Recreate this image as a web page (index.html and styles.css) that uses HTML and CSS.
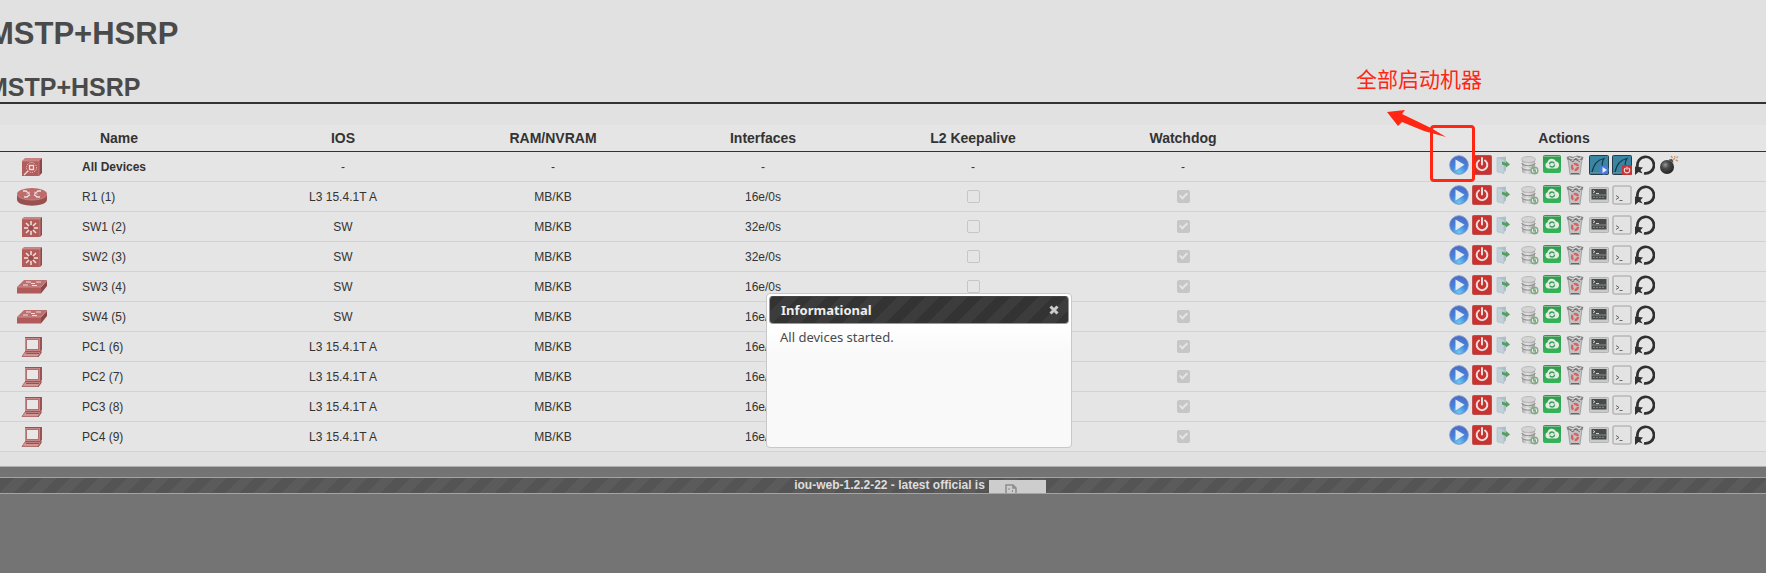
FILE: index.html
```html
<!DOCTYPE html>
<html lang="en">
<head>
<meta charset="utf-8">
<title>MSTP+HSRP</title>
<link rel="stylesheet" href="styles.css">
</head>
<body>
<svg class="sprite" aria-hidden="true">
  <defs>
    <radialGradient id="blue" cx="50%" cy="90%" r="85%"><stop offset="0" stop-color="#6cc9f3"/><stop offset=".5" stop-color="#4685dc"/><stop offset="1" stop-color="#4b6cc6"/></radialGradient>
    <linearGradient id="green" x1="0" y1="0" x2="0" y2="1"><stop offset="0" stop-color="#2f9a4c"/><stop offset="1" stop-color="#35b458"/></linearGradient>
    <linearGradient id="metal" x1="0" y1="0" x2="1" y2="0"><stop offset="0" stop-color="#a8a8a8"/><stop offset=".4" stop-color="#e0e0e0"/><stop offset="1" stop-color="#9c9c9c"/></linearGradient>
    <radialGradient id="ball" cx="38%" cy="35%" r="65%"><stop offset="0" stop-color="#999"/><stop offset=".4" stop-color="#4a4a4a"/><stop offset="1" stop-color="#262626"/></radialGradient>
  </defs>
  <symbol id="dev-all" viewBox="0 0 20 20">
    <path d="M0 4 3 1H20L17 4Z" fill="#c98080"/><path d="M17 4 20 1V16L17 19Z" fill="#8a4848"/><path d="M0 4H17V19H0Z" fill="#b35c5c"/>
    <path d="M0 4H17V19" fill="none" stroke="#cf9090" stroke-width=".7"/>
    <circle cx="9.500" cy="10.500" r="5" fill="none" stroke="#ecd2d2" stroke-width="1" stroke-dasharray="1 1"/>
    <path d="M7.500 8.500h4v4h-4zM2 18 6 14" fill="none" stroke="#f0dcdc" stroke-width="1.300"/>
  </symbol>
  <symbol id="dev-router" viewBox="0 0 30 20">
    <path d="M0 7V13C1 20.500 29 20.500 30 13V7Z" fill="#985050"/><ellipse cx="15" cy="7" rx="15" ry="6" fill="#bd6c6c"/>
    <path d="M0 7C1 15 29 15 30 7" fill="none" stroke="#cf9292" stroke-width=".7"/>
    <path d="M6 4H9L12 6.500M24 4H21L18 6.500M7 10H10L13 7.500M23 10H20L17 7.500" fill="none" stroke="#f0dede" stroke-width="1.300"/>
    <path d="M12.500 4.500V7H9M17.500 4.500V7H21" fill="none" stroke="#e4c2c2" stroke-width=".7"/>
  </symbol>
  <symbol id="dev-l3" viewBox="0 0 20 20">
    <path d="M0 2 2 0H20L18 2Z" fill="#c98080"/><path d="M18 2 20 0V18L18 20Z" fill="#8a4848"/><path d="M0 2H18V20H0Z" fill="#b35c5c"/>
    <path d="M0 2H18V20" fill="none" stroke="#cf9090" stroke-width=".7"/>
    <rect x="7" y="9" width="4" height="4" fill="#9b4c4c"/>
    <path d="M9 4V8M9 14V18M2 11H6M12 11H16M4 6l3 3M14 6l-3 3M4 16l3-3M14 16l-3-3" stroke="#f2e2e2" stroke-width="1.500"/>
  </symbol>
  <symbol id="dev-l2" viewBox="0 0 30 14">
    <path d="M0 7 7 0H30L24 7Z" fill="#bd7070"/><path d="M24 7 30 0V6L24 13.500Z" fill="#8a4848"/><path d="M0 7H24V13.500H0Z" fill="#b05a5a"/>
    <path d="M0 7H24L30 .5" fill="none" stroke="#d8a2a2" stroke-width=".7"/>
    <path d="M9 2h5M14 3.500h4M19 2h5M6 5h5M15 5.500h5" stroke="#f0dede"/>
  </symbol>
  <symbol id="dev-pc" viewBox="0 0 20 20">
    <path d="M3 0H20V13L18 15H3Z" fill="#9c5252"/><path d="M3 1H18V14H3Z" fill="#c98686"/><path d="M4.500 2.500H16.500V12.500H4.500Z" fill="#e9e6e6" stroke="#9c5252" stroke-width=".7"/>
    <path d="M3 15H19L16 19.500H0Z" fill="#cf9898" stroke="#a65c5c" stroke-width=".8"/><path d="M4 16.500H17M19 14V16L16 20" fill="none" stroke="#994f4f"/>
  </symbol>
  <symbol id="i-play" viewBox="0 0 20 20">
    <circle cx="10" cy="10" r="9.300" fill="url(#blue)" stroke="#7d93c9" stroke-width=".9"/><path d="M6.500 4.500 15.500 9.800 6.500 15.500Z" fill="#e3ebf3"/>
  </symbol>
  <symbol id="i-power" viewBox="0 0 20 20">
    <rect x=".5" y=".5" width="19" height="19" rx="1" fill="#c8322f" stroke="#c05050"/><path d="M7 5.500a5.300 5.300 0 1 0 6 0M10 3v6.500" fill="none" stroke="#ecdede" stroke-width="2" stroke-linecap="round"/>
  </symbol>
  <symbol id="i-export" viewBox="0 0 20 20">
    <path d="M3 2.500 11 1.500V16L3 17.500Z" fill="#adbfc9"/><path d="M2 2.500 9 4.500V18.500L2 16.500Z" fill="#c2d1d9" stroke="#aabcc6" stroke-width=".6"/><path d="M7 6.500 11 8V6L15 9.500 11 12.500V11L7 9.500Z" fill="#559f63"/>
  </symbol>
  <symbol id="i-db" viewBox="0 0 20 20">
    <path d="M3 4V16.500C4 20 15 20 16 16.500V4Z" fill="url(#metal)"/><ellipse cx="9.500" cy="4.500" rx="7" ry="3" fill="#d4d4d4" stroke="#aaa" stroke-width=".7"/>
    <path d="M2.500 8C4 11.500 15 11.500 16.500 8M2.500 12.500C4 16 15 16 16.500 12.500" fill="none" stroke="#8f8f8f"/><path d="M2.500 6.500C4 10 15 10 16.500 6.500M2.500 11C4 14.500 15 14.500 16.500 11" fill="none" stroke="#e8e8e8" stroke-width=".7"/>
    <circle cx="15.500" cy="15.500" r="4" fill="#86a988"/><path d="M13.500 14v3h2M17.500 17v-3h-2" fill="none" stroke="#e0e8e0"/>
  </symbol>
  <symbol id="i-cloud" viewBox="0 0 20 20">
    <rect x="1" y="0" width="18" height="18" rx="2" fill="url(#green)"/><path d="M2 1.500H18" stroke="#7dbb8b"/><path d="M6 13.500a3.300 3.300 0 0 1-.5-6.300A4.500 4.500 0 0 1 14 6.500 3.600 3.600 0 0 1 14.500 13.500Z" fill="#e2ece4"/>
    <circle cx="10" cy="9.500" r="2.500" fill="none" stroke="#3b9c55" stroke-width="1.300" stroke-dasharray="6.500 1.300"/>
  </symbol>
  <symbol id="i-trash" viewBox="0 0 20 20">
    <path d="M3 4H17L15 19.500H5Z" fill="#c4c4c4" stroke="#8e8e8e" stroke-width=".7"/><path d="M1.500 2 5 1 8 2 12 .5 18.500 2 17.500 5H2.500Z" fill="#858585"/><path d="M4 2.500 8 4 11 2 14 4 16 2.500" fill="none" stroke="#dedede" stroke-width="1.200"/>
    <path d="M5 5l3 2 2-3 5 3" fill="none" stroke="#666" stroke-width=".9"/><circle cx="10" cy="12" r="3" fill="none" stroke="#d86262" stroke-width="2.400" stroke-dasharray="5 1.300"/><path d="M6 18.500H14" stroke="#666"/>
  </symbol>
  <symbol id="i-shark" viewBox="0 0 20 20">
    <rect x=".5" y=".5" width="19" height="19" rx="1" fill="#3a85a4" stroke="#263c46"/><path d="M3 17C5 9 8 5 15 3.500 12.500 7 12.500 11 15 16" fill="none" stroke="#173744" stroke-width="1.200"/><path d="M1 17.500H19" stroke="#6298aa" stroke-width=".7"/>
  </symbol>
  <symbol id="i-sharkplay" viewBox="0 0 20 20"><use href="#i-shark"/><circle cx="15" cy="15" r="4.700" fill="#477dd8"/><path d="M13.500 12 18 15 13.500 18Z" fill="#eaf0f5"/></symbol>
  <symbol id="i-sharkstop" viewBox="0 0 20 20"><use href="#i-shark"/><rect x="10" y="10" width="10" height="10" rx="1" fill="#c93434"/><path d="M13.500 13a2.700 2.700 0 1 0 3 0M15 11.800v3" fill="none" stroke="#f0dede" stroke-width="1.200"/></symbol>
  <symbol id="i-term" viewBox="0 0 20 20">
    <rect x=".5" y="2.500" width="19" height="15" rx="1" fill="#c9c9c9" stroke="#b4b4b4"/><rect x="2.500" y="4" width="15" height="10.500" fill="#484b4b"/><path d="M3 10H17" stroke="#8a8a8a"/><path d="M4 5.500l2 1.200-2 1.300M7 8.500h3" fill="none" stroke="#ddd" stroke-width=".9"/><path d="M4 12.300h12" stroke="#8e8e8e" stroke-dasharray="2 1"/>
  </symbol>
  <symbol id="i-shell" viewBox="0 0 20 20">
    <rect x="1" y="1" width="18" height="18" rx="2" fill="#e3e3e3" stroke="#b8b8b8" stroke-width="1.600"/><path d="M4 10.500l3 2-3 2M7.500 15.500h3" fill="none" stroke="#666" stroke-width="1"/>
  </symbol>
  <symbol id="i-reload" viewBox="0 0 20 20">
    <path d="M2.600 12A8.300 8.300 0 1 1 9 18.200" fill="none" stroke="#303030" stroke-width="2.700"/><path d="M0 11.500 8 12.500 5.500 15 7.500 18.500 3.500 17 0 20Z" fill="#303030"/>
  </symbol>
  <symbol id="i-bomb" viewBox="0 0 20 20">
    <circle cx="8" cy="12" r="7" fill="url(#ball)"/><path d="M10 5 13 4.500 14 7.500" fill="#444" stroke="#555"/><path d="M14 5l2-2M16.500 5l2.500 1M15.500 1l.5 1.500M12 1l1.500 2M17.500 3l1.500-1.500" stroke="#cf9a72" stroke-width="1.400"/>
  </symbol>
</svg>

<div class="page">
  <main class="content">
    <h1 class="title">MSTP+HSRP</h1>
    <h2 class="subtitle">MSTP+HSRP</h2>
    <table class="devices">
      <colgroup><col class="col-icon"><col class="col-name"><col class="col-data"><col class="col-data"><col class="col-data"><col class="col-data"><col class="col-data"><col></colgroup>
      <thead>
        <tr><th colspan="2">Name</th><th>IOS</th><th>RAM/NVRAM</th><th>Interfaces</th><th>L2 Keepalive</th><th>Watchdog</th><th>Actions</th></tr>
      </thead>
      <tbody id="rows"></tbody>
    </table>
  </main>
  <footer class="footer">
    <p class="version"><span>iou-web-1.2.2-22 - latest official is</span>
      <svg class="frame" viewBox="0 0 57 17" role="img" aria-label="Unavailable"><rect width="57" height="17" fill="#cdcdcd"/><path d="M17 17V5H24L27 8V17M24 5V8H27" fill="none" stroke="#8c8c8c" stroke-width="1.500"/><path d="M20 8v2M23.500 10v2" stroke="#8c8c8c"/></svg>
    </p>
  </footer>

  <section class="dialog" role="dialog" aria-labelledby="dialog-title">
    <header class="dialog-bar">
      <h3 class="dialog-title" id="dialog-title">Informational</h3>
      <button class="dialog-close" type="button" aria-label="Close"><svg viewBox="0 0 10 10"><path d="M1.500 1.500 8.500 8.500M8.500 1.500 1.500 8.500" stroke="#ccc" stroke-width="3"/></svg></button>
    </header>
    <p class="dialog-text">All devices started.</p>
  </section>

  <p class="note" lang="zh">全部启动机器</p>
  <svg class="arrow" viewBox="0 0 60 30" aria-hidden="true"><path d="M0 3 18 1 15 5 44 19 59 28 37 22 15 13 11 17Z" fill="#ff2614"/></svg>
  <div class="marker"></div>
</div>
<script src="devices.js"></script>
</body>
</html>
```

FILE: styles.css
```css
body {
  margin: 0;
  background: #747474;
  color: #333;
  font: 12px/16px "Liberation Sans", Arial, sans-serif;
  overflow: hidden;
}

.sprite {
  position: absolute;
  width: 0;
  height: 0;
}

.page {
  position: relative;
  width: calc(100% + 74px);
}

.content {
  padding: 16px 0 14px;
  background: #e1e1e1;
  border-bottom: 1px solid #b0b0b0;
}

.title,
.subtitle {
  margin: 0;
  padding: 0;
  color: #4a4a4a;
  text-indent: -12px;
}

.title {
  font-size: 31px;
  line-height: 36px;
}

.subtitle {
  margin: 20px 0 21px;
  border-bottom: 2px solid #333;
  font-size: 25px;
  line-height: 30px;
  text-indent: -13px;
}

.devices {
  width: 100%;
  border-collapse: collapse;
  table-layout: fixed;
  background: #e5e5e5;
}

.col-icon { width: 64px; }
.col-name { width: 174px; }
.col-data { width: 210px; }

.devices th {
  height: 26px;
  padding: 0;
  border-bottom: 1px solid #333;
  font-size: 14px;
  text-align: center;
}

.devices td {
  height: 29px;
  padding: 0;
  border-bottom: 1px solid #d2d2d2;
  text-align: center;
}

.devices .name {
  padding-left: 18px;
  text-align: left;
}

.devices .strong { font-weight: bold; }

.device-icon {
  display: block;
  width: 30px;
  height: 20px;
  margin: 0 auto;
}

.check {
  appearance: none;
  display: block;
  box-sizing: border-box;
  width: 13px;
  height: 13px;
  margin: 0 auto;
  border: 1px solid #c6c6c6;
  border-radius: 2px;
}

.check:checked {
  background: #c6c6c6;
}

.check:checked::after {
  content: "";
  display: block;
  width: 3px;
  height: 6px;
  margin: 0 auto;
  border: solid #e5e5e5;
  border-width: 0 2px 2px 0;
  transform: rotate(45deg);
}

.actions {
  width: 231px;
  margin: 0 auto;
  padding-bottom: 3px;
  text-align: left;
  white-space: nowrap;
}

.action {
  width: 20px;
  height: 20px;
  padding: 0;
  border: 0;
  background: none;
  vertical-align: middle;
}

.action svg {
  display: block;
  width: 20px;
  height: 20px;
}

.footer {
  padding-top: 10px;
}

.version {
  display: flex;
  justify-content: center;
  align-items: flex-start;
  gap: 4px;
  height: 15px;
  margin: 0;
  overflow: hidden;
  border: solid #a4a4a4;
  border-width: 1px 0;
  background: repeating-linear-gradient(135deg, #545454 0 10px, #5b5b5b 10px 20px);
  color: #dedede;
  font-weight: bold;
  line-height: 15px;
}

.frame {
  width: 57px;
  height: 17px;
  margin-top: 2px;
}

.dialog {
  position: absolute;
  top: 293px;
  left: 766px;
  box-sizing: border-box;
  width: 306px;
  height: 155px;
  padding: 2px;
  border: 1px solid #c8c8c8;
  border-radius: 4px;
  background: linear-gradient(#fff 30px, #f9f9f9 60px);
  font-family: "Noto Sans", Verdana, sans-serif;
  font-size: 13px;
}

.dialog-bar {
  display: flex;
  justify-content: space-between;
  align-items: center;
  height: 26px;
  padding: 0 9px 0 11px;
  border: 1px solid #999;
  border-top-color: #444;
  border-radius: 4px;
  background: repeating-linear-gradient(135deg, #333 0 10px, #3c3c3c 10px 20px);
}

.dialog-title {
  margin: 0;
  color: #eee;
  font-size: 13px;
}

.dialog-close {
  padding: 0;
  border: 0;
  background: none;
}

.dialog-close svg {
  display: block;
  width: 10px;
  height: 10px;
}

.dialog-text {
  margin: 5px 11px;
  color: #4a4a4a;
}

.note {
  position: absolute;
  top: 64px;
  left: 1356px;
  margin: 0;
  color: #ff2614;
  font: 21px/28px "Noto Sans CJK SC", sans-serif;
}

.arrow {
  position: absolute;
  top: 109px;
  left: 1387px;
  width: 60px;
  height: 30px;
}

.marker {
  position: absolute;
  top: 125px;
  left: 1430px;
  box-sizing: border-box;
  width: 45px;
  height: 57px;
  border: 3px solid #ff2614;
  border-radius: 4px;
}
```

FILE: devices.js
```js
const devices = [
  { icon: "router", name: "R1 (1)", ios: "L3 15.4.1T A", ports: "16e/0s" },
  { icon: "l3", name: "SW1 (2)", ios: "SW", ports: "32e/0s" },
  { icon: "l3", name: "SW2 (3)", ios: "SW", ports: "32e/0s" },
  { icon: "l2", name: "SW3 (4)", ios: "SW", ports: "16e/0s" },
  { icon: "l2", name: "SW4 (5)", ios: "SW", ports: "16e/0s" },
  { icon: "pc", name: "PC1 (6)", ios: "L3 15.4.1T A", ports: "16e/0s" },
  { icon: "pc", name: "PC2 (7)", ios: "L3 15.4.1T A", ports: "16e/0s" },
  { icon: "pc", name: "PC3 (8)", ios: "L3 15.4.1T A", ports: "16e/0s" },
  { icon: "pc", name: "PC4 (9)", ios: "L3 15.4.1T A", ports: "16e/0s" }
];

const common = [["play", "Start"], ["power", "Stop"], ["export", "Export"], ["db", "Save"], ["cloud", "Sync"], ["trash", "Wipe"]];
const allActions = [...common, ["sharkplay", "Start capture"], ["sharkstop", "Stop capture"], ["reload", "Reload"], ["bomb", "Reset"]];
const rowActions = [...common, ["term", "Console"], ["shell", "Shell"], ["reload", "Reload"]];

const buttons = (list, name) => `<div class="actions">${list.map(([id, label]) =>
  `<button class="action" type="button" aria-label="${label} ${name}"><svg><use href="#i-${id}"/></svg></button>`).join(" ")}</div>`;

const icon = id => `<td><svg class="device-icon" aria-hidden="true"><use href="#dev-${id}"/></svg></td>`;

const check = (label, on) => `<input class="check" type="checkbox" disabled aria-label="${label}"${on ? " checked" : ""}>`;

const allRow = `<tr>${icon("all")}<td class="name strong">All Devices</td>${"<td>-</td>".repeat(5)}<td>${buttons(allActions, "all devices")}</td></tr>`;

document.getElementById("rows").innerHTML = allRow + devices.map(d => `<tr>${icon(d.icon)}
  <td class="name">${d.name}</td><td>${d.ios}</td><td>MB/KB</td><td>${d.ports}</td>
  <td>${check("L2 keepalive " + d.name, false)}</td>
  <td>${check("Watchdog " + d.name, true)}</td>
  <td>${buttons(rowActions, d.name)}</td></tr>`).join("");
```
